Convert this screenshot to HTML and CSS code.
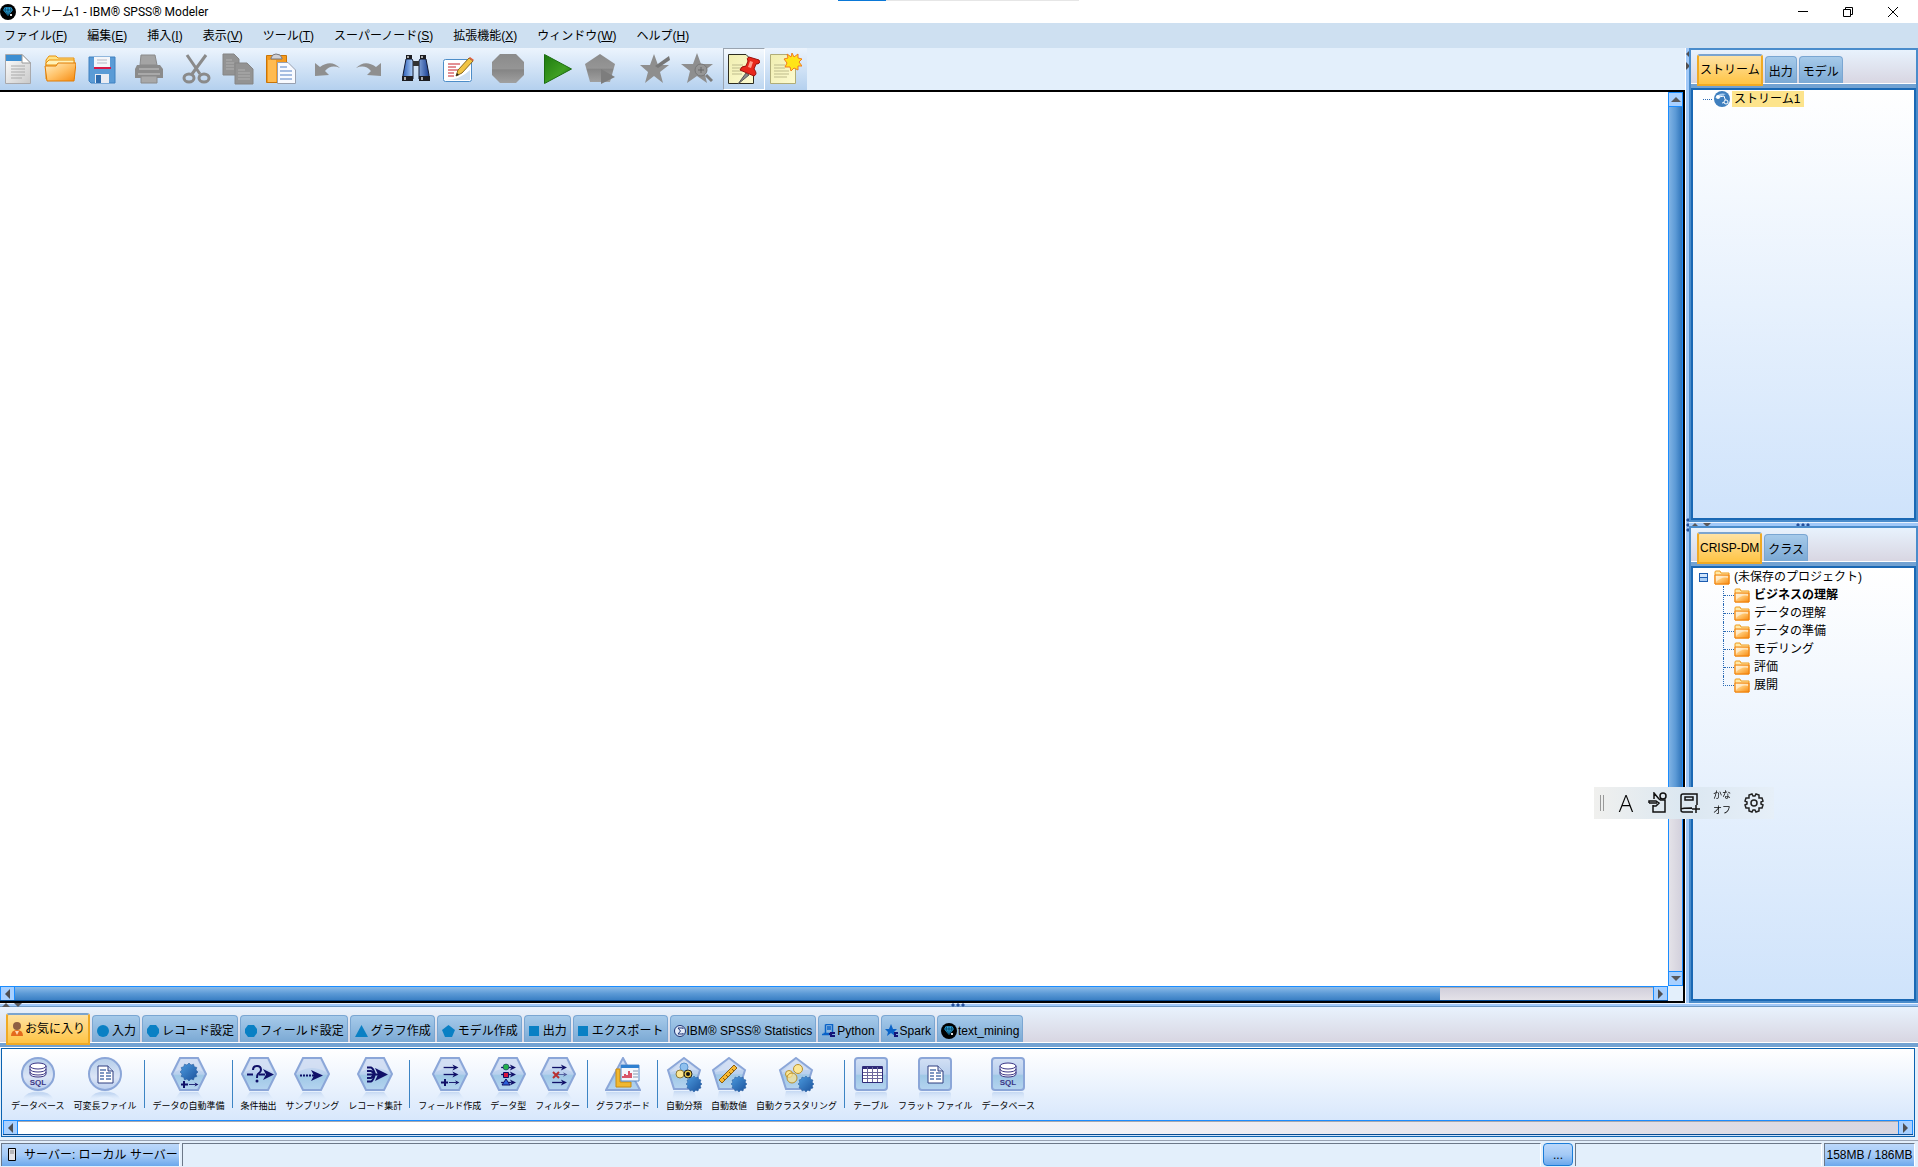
FILE: index.html
```
<!DOCTYPE html>
<html lang="ja">

<head>
    <meta charset="UTF-8">
    <meta name="viewport" content="width=device-width, initial-scale=1.0">
    <title>ストリーム1 - IBM® SPSS® Modeler</title>
    <link rel="stylesheet" href="styles.css">
</head>

<body>
    <!-- shared icons -->
    <svg class="defs" aria-hidden="true">
        <defs>
            <linearGradient id="g_node" x1="0" y1="0" x2="0" y2="1">
                <stop offset="0" stop-color="#d3e0f4" />
                <stop offset="0.5" stop-color="#b9d0ee" />
                <stop offset="0.55" stop-color="#9fc8e6" />
                <stop offset="1" stop-color="#b5d4f0" />
            </linearGradient>
            <linearGradient id="g_circle" x1="0" y1="0" x2="0" y2="1">
                <stop offset="0" stop-color="#b4cdea" />
                <stop offset="0.6" stop-color="#dbe5f6" />
                <stop offset="1" stop-color="#b9cdee" />
            </linearGradient>
            <linearGradient id="g_mirror" x1="0" y1="0" x2="0" y2="1">
                <stop offset="0" stop-color="#bcd2f0" stop-opacity="0.8" />
                <stop offset="1" stop-color="#dbe9fb" stop-opacity="0" />
            </linearGradient>
            <linearGradient id="g_gear" x1="0" y1="0" x2="1" y2="1">
                <stop offset="0" stop-color="#4d9ce0" />
                <stop offset="1" stop-color="#1a519b" />
            </linearGradient>
            <linearGradient id="g_folder" x1="0" y1="0" x2="1" y2="1">
                <stop offset="0" stop-color="#fff0c4" />
                <stop offset="0.5" stop-color="#ffc268" />
                <stop offset="1" stop-color="#f68a10" />
            </linearGradient>
            <linearGradient id="g_page" x1="0" y1="0" x2="1" y2="1">
                <stop offset="0" stop-color="#ffffff" />
                <stop offset="1" stop-color="#c9c9c9" />
            </linearGradient>
            <linearGradient id="g_note" x1="0" y1="0" x2="1" y2="1">
                <stop offset="0" stop-color="#f0eeb0" />
                <stop offset="1" stop-color="#fdfbd0" />
            </linearGradient>
            <linearGradient id="g_tube" x1="0" y1="0" x2="1" y2="0">
                <stop offset="0" stop-color="#2c5fb8" />
                <stop offset="0.4" stop-color="#b4d4fa" />
                <stop offset="1" stop-color="#1a3f92" />
            </linearGradient>
            <linearGradient id="g_play" x1="0" y1="0" x2="1" y2="1">
                <stop offset="0" stop-color="#1d7a10" />
                <stop offset="0.6" stop-color="#3f9f22" />
                <stop offset="1" stop-color="#136b0c" />
            </linearGradient>
            <linearGradient id="g_gray" x1="0" y1="0" x2="0" y2="1">
                <stop offset="0" stop-color="#8b8b8b" />
                <stop offset="0.5" stop-color="#959595" />
                <stop offset="0.55" stop-color="#858585" />
                <stop offset="1" stop-color="#a0a0a0" />
            </linearGradient>
        </defs>

        <symbol id="n_circle" viewBox="0 0 36 44">
            <path d="M5 43C9 35 27 35 31 43" fill="none" stroke="url(#g_mirror)" stroke-width="5" />
            <circle cx="18" cy="17" r="16" fill="url(#g_circle)" stroke="#8ba6d8" stroke-width="2" />
        </symbol>
        <symbol id="n_hex" viewBox="0 0 36 44">
            <path d="M9 35H27L33 43H3Z" fill="url(#g_mirror)" />
            <path d="M9 1H27L35 17L27 33H9L1 17Z" fill="url(#g_node)" stroke="#8ba6d8" stroke-width="2" />
            <path d="M10 3H26L32 15Q18 7 4 15Z" fill="#d5e0f4" opacity="0.8" />
        </symbol>
        <symbol id="n_pent" viewBox="0 0 36 44">
            <path d="M8 34H28L31 43H6Z" fill="url(#g_mirror)" />
            <path d="M18 1L34 13L28 32H8L2 13Z" fill="url(#g_node)" stroke="#8ba6d8" stroke-width="2" />
            <path d="M18 3L31 13Q18 12 4 15Z" fill="#d5e0f4" opacity="0.8" />
            <use href="#gear" x="20" y="19" width="16" height="16" />
        </symbol>
        <symbol id="n_square" viewBox="0 0 36 44">
            <rect x="2" y="35" width="32" height="9" rx="2" fill="url(#g_mirror)" />
            <rect x="2" y="1" width="32" height="32" rx="3" fill="url(#g_node)" stroke="#8ba6d8" stroke-width="2" />
        </symbol>
        <symbol id="gear" viewBox="0 0 16 16">
            <path d="M8 0L9.800 1.800L12 1L12.700 3.300L15 4L14.200 6.200L16 8L14.200 9.800L15 12L12.700 12.700L12 15L9.800 14.200L8 16L6.200 14.200L4 15L3.300 12.700L1 12L1.800 9.800L0 8L1.800 6.200L1 4L3.300 3.300L4 1L6.200 1.800Z" fill="url(#g_gear)" stroke="#2a5c9e" stroke-width="0.500" />
        </symbol>
        <symbol id="g_disks" viewBox="0 0 36 44">
            <g fill="#fff" stroke="#3a3484" stroke-width="1">
                <path d="M10 9V17C10 21 26 21 26 17V9" />
                <path d="M10 12C10 16 26 16 26 12M10 15C10 19 26 19 26 15" fill="none" />
                <ellipse cx="18" cy="9" rx="8" ry="3" />
            </g>
        </symbol>
        <symbol id="g_file" viewBox="0 0 36 44">
            <path d="M11 9H21L26 14V26H11Z" fill="#fff" stroke="#2e3f80" />
            <path d="M21 9V14H26" fill="#ccd8ee" stroke="#2e3f80" />
            <path d="M13 13H19M13 16H17M19 16H24M13 19H17M19 19H24M13 22H17M19 22H24" stroke="#5578ae" stroke-width="1.500" />
        </symbol>
        <symbol id="arrow" viewBox="0 0 18 8">
            <path d="M0 4H12" stroke="#101068" stroke-width="1.500" />
            <path d="M10 0.500L17 4L10 7.500L12 4Z" fill="#101068" />
        </symbol>
        <symbol id="folder" viewBox="0 0 16 15">
            <path d="M1 14V2Q1 1 2 1H6L7 3H15V14Z" fill="#ffe9a8" stroke="#f09a18" />
            <path d="M1 5H15V14H1Z" fill="url(#g_folder)" stroke="#f07c08" />
            <path d="M2 12Q8 6 14 8V6H2Z" fill="#fff" opacity="0.500" />
        </symbol>
        <symbol id="gem" viewBox="0 0 16 16">
            <circle cx="8" cy="8" r="8" fill="#000" />
            <path d="M5 3H11L13 6L8 12L3 6Z" fill="#2ba4dc" />
            <path d="M3 6H13M6 3L5 6L8 12L11 6L10 3M8 3V12" stroke="#05334d" stroke-width="0.700" fill="none" />
            <path d="M10 10H12V12H10Z" fill="#ddd" />
        </symbol>
        <symbol id="tri_up" viewBox="0 0 10 5"><path d="M0 5L5 0L10 5Z" fill="#59595c" /></symbol>
        <symbol id="tri_down" viewBox="0 0 10 5"><path d="M0 0H10L5 5Z" fill="#59595c" /></symbol>
        <symbol id="tri_left" viewBox="0 0 5 10"><path d="M5 0V10L0 5Z" fill="#4f4f52" /></symbol>
        <symbol id="tri_right" viewBox="0 0 5 10"><path d="M0 0V10L5 5Z" fill="#4f4f52" /></symbol>
        <symbol id="dots_h" viewBox="0 0 14 4">
            <path d="M2 0L4 2L2 4L0 2ZM7 0L9 2L7 4L5 2ZM12 0L14 2L12 4L10 2Z" fill="#24509c" />
        </symbol>
        <symbol id="dots_v" viewBox="0 0 4 14">
            <path d="M2 0L4 2L2 4L0 2ZM2 5L4 7L2 9L0 7ZM2 10L4 12L2 14L0 12Z" fill="#24509c" />
        </symbol>
    </svg>

    <header class="titlebar">
        <svg class="app_icon" width="16" height="16"><use href="#gem" /></svg>
        <h1>ストリーム1 - IBM® SPSS® Modeler</h1>
        <div class="win_buttons">
            <button aria-label="最小化"><svg width="10" height="10"><path d="M0 4.500H10" stroke="#000" /></svg></button>
            <button aria-label="元に戻す"><svg width="10" height="10" fill="none" stroke="#000"><path d="M0.500 2.500H7.500V9.500H0.500ZM2.500 2V0.500H9.500V7.500H8" /></svg></button>
            <button aria-label="閉じる"><svg width="10" height="10"><path d="M0 0L10 10M10 0L0 10" stroke="#000" /></svg></button>
        </div>
        <div class="top_progress"><span></span></div>
    </header>

    <nav class="menubar">
        <button>ファイル(<u>F</u>)</button>
        <button>編集(<u>E</u>)</button>
        <button>挿入(<u>I</u>)</button>
        <button>表示(<u>V</u>)</button>
        <button>ツール(<u>T</u>)</button>
        <button>スーパーノード(<u>S</u>)</button>
        <button>拡張機能(<u>X</u>)</button>
        <button>ウィンドウ(<u>W</u>)</button>
        <button>ヘルプ(<u>H</u>)</button>
    </nav>

    <main>
        <section class="workspace">
            <div class="toolbar_row">
                <div class="toolbar">
                    <div class="tools">
                        <button aria-label="新規">
                            <svg width="32" height="32">
                                <path d="M3.500 1.500H20L28.500 10V30.500H3.500Z" fill="url(#g_page)" stroke="#a9a9ac" />
                                <path d="M4 2H20V8H4Z" fill="#3c8ed2" />
                                <path d="M20 1.500V10H28.500Z" fill="#fff" stroke="#999" />
                                <path d="M9 13H23M9 16H23M9 19H23M9 22H23M9 25H20" stroke="#aaa" />
                            </svg>
                        </button>
                        <button aria-label="開く">
                            <svg width="32" height="32">
                                <path d="M2 26V7L5 3H12L14 5H30V26Z" fill="#ffe183" stroke="#e8900c" />
                                <path d="M2 10L5 7H30V12H2Z" fill="#fff2b8" stroke="#e8900c" />
                                <path d="M1 13H12L14 10H32L30 28H3Z" fill="url(#g_folder)" stroke="#e07c06" />
                            </svg>
                        </button>
                        <button aria-label="保存">
                            <svg width="32" height="32">
                                <path d="M3 4H29V30H5L3 28Z" fill="#5a9bd6" stroke="#3f80c0" />
                                <path d="M8 4H24V16H8Z" fill="#f4f6fa" />
                                <path d="M8 14H25V16H8Z" fill="#d81848" />
                                <path d="M11 7H21M11 10H21" stroke="#b5b8c4" />
                                <path d="M9 21H23V30H9Z" fill="#e9ecf3" />
                                <path d="M10 22H15V30H10Z" fill="#2f6cae" />
                            </svg>
                        </button>
                    </div>
                    <div class="tools">
                        <button disabled aria-label="印刷">
                            <svg width="32" height="32">
                                <path d="M8 2H22L24 12H7Z" fill="#a4a4a4" stroke="#8a8a8a" />
                                <path d="M4 12H27L30 16V25H2V16Z" fill="#8b8b8b" />
                                <path d="M6 16H26M5 21H27" stroke="#a9a9a9" stroke-width="2" />
                                <path d="M8 23H24V30H8Z" fill="#a8a8a8" stroke="#8a8a8a" />
                            </svg>
                        </button>
                    </div>
                    <div class="tools">
                        <button disabled aria-label="切り取り">
                            <svg width="32" height="32" fill="none" stroke="#8a8a8a">
                                <path d="M7 2L20 21M26 2L12 21" stroke-width="3" />
                                <ellipse cx="9" cy="25" rx="5" ry="4" stroke-width="3" />
                                <ellipse cx="24" cy="25" rx="5" ry="4" stroke-width="3" />
                            </svg>
                        </button>
                        <button disabled aria-label="コピー">
                            <svg width="32" height="32" fill="#939393" stroke="#858585">
                                <path d="M1 1H12L17 6V22H1Z" />
                                <path d="M4 7H10M4 10H12M4 13H12M4 16H12" stroke="#b0b0b0" />
                                <path d="M13 10H25L31 16V31H13Z" />
                                <path d="M16 17H23M16 20H28M16 23H28M16 26H28" stroke="#b0b0b0" />
                            </svg>
                        </button>
                        <button aria-label="貼り付け">
                            <svg width="32" height="32">
                                <path d="M2.500 2.500H22.500V29.500H2.500Z" fill="#f49a1e" stroke="#c87408" />
                                <path d="M4 7H12V29H4Z" fill="#ffbb50" />
                                <path d="M7 5Q8 1 12 1Q17 1 18 5V6H7Z" fill="#d0d0d4" stroke="#77777c" />
                                <path d="M13.500 9.500H24L31.500 17V30.500H13.500Z" fill="#f8faff" stroke="#98a0b0" />
                                <path d="M16 14H23M16 18H28M16 22H28M16 26H28" stroke="#5480c4" />
                            </svg>
                        </button>
                    </div>
                    <div class="tools">
                        <button disabled aria-label="元に戻す">
                            <svg width="32" height="32"><path d="M4 10L9 14Q20 6 29 15Q20 11 14 18L18 22L4 23Z" fill="#8f8f8f" /></svg>
                        </button>
                        <button disabled aria-label="やり直し">
                            <svg width="32" height="32"><path d="M28 10L23 14Q12 6 3 15Q12 11 18 18L14 22L28 23Z" fill="#8f8f8f" /></svg>
                        </button>
                    </div>
                    <div class="tools">
                        <button aria-label="検索">
                            <svg width="32" height="32">
                                <path d="M6 6L3 22V26H13V8L12 6ZM26 6L29 22V26H19V8L20 6Z" fill="url(#g_tube)" stroke="#111a33" />
                                <path d="M13 8H19V13H13Z" fill="#333" />
                                <path d="M6 2H12V6H6ZM20 2H26V6H20ZM2 23H13V28H2ZM19 23H30V28H19Z" fill="#1c1c20" />
                                <path d="M5 24V27M22 24V27M8 3V5M22 3V5" stroke="#aaa" stroke-width="2" />
                            </svg>
                        </button>
                        <button aria-label="ストリームのプロパティ">
                            <svg width="32" height="32">
                                <rect x="1.500" y="6.500" width="28" height="22" rx="2" fill="#fff" stroke="#4d8dc8" />
                                <path d="M3 27Q18 27 28 17V27Z" fill="#cfe0f2" />
                                <path d="M6 11H18M6 14H14M6 17H16M6 20H12M6 23H12" stroke="#c82028" />
                                <path d="M14 23L16 17L27 5L31 8L20 20Z" fill="#f2c444" stroke="#8a6a20" />
                                <path d="M27 5L28 4L32 7L31 8Z" fill="#e05a38" />
                                <path d="M14 23L15 20L17 22Z" fill="#222" />
                            </svg>
                        </button>
                    </div>
                    <div class="tools wide">
                        <button disabled aria-label="停止">
                            <svg width="32" height="32"><path d="M8 1H24L32 9V22L24 30H8L0 22V9Z" fill="url(#g_gray)" /></svg>
                        </button>
                    </div>
                    <div class="tools wide">
                        <button aria-label="実行">
                            <svg width="32" height="32"><path d="M2.500 1.500L29.500 16L2.500 30.500Z" fill="url(#g_play)" stroke="#1b6d10" /></svg>
                        </button>
                        <button disabled aria-label="選択を実行">
                            <svg width="32" height="32">
                                <path d="M16 1L31 11L26 29H6L1 11Z" fill="url(#g_gray)" />
                                <path d="M17 16L31 24L17 31Z" fill="#7d7d7d" />
                            </svg>
                        </button>
                    </div>
                    <div class="tools wider">
                        <button disabled aria-label="お気に入りに追加">
                            <svg width="32" height="32">
                                <path d="M15 1L19 12H30L21 19L24 30L15 23L6 30L9 19L1 12H11Z" fill="#8e8e8e" />
                                <path d="M16 13L30 3L31 7L19 15Z" fill="#777" />
                            </svg>
                        </button>
                        <button disabled aria-label="お気に入りを検索">
                            <svg width="32" height="32">
                                <path d="M16 0L20 11H32L23 18L26 30L16 23L6 30L9 18L0 11H12Z" fill="#8e8e8e" />
                                <circle cx="20" cy="17" r="6" fill="#959595" stroke="#777" />
                                <path d="M17 17H23M20 14V20" stroke="#666" />
                                <path d="M25 22L31 28" stroke="#7c7c7c" stroke-width="3" />
                            </svg>
                        </button>
                    </div>
                    <button class="toggle pressed" aria-label="コメントを表示">
                        <svg width="32" height="32">
                            <path d="M0.500 1.500H18L25.500 9V30.500H0.500Z" fill="url(#g_note)" stroke="#2c2c20" />
                            <path d="M4 12H15M4 15H15M4 18H14M4 21H14" stroke="#bdbb8c" />
                            <path d="M18 20L10 31L21 22Z" fill="#888" stroke="#555" />
                            <path d="M12 17Q13 13 18 13L20 8Q18 5 21 4L31 7Q33 11 28 11L26 16Q30 21 26 23Z" fill="#e8281c" stroke="#9c100c" />
                            <path d="M20 14L22 8L25 9L23 15Z" fill="#ff9a8a" />
                        </svg>
                    </button>
                    <button class="toggle" aria-label="新しいコメント">
                        <svg width="32" height="32">
                            <path d="M0.500 1.500H18L25.500 9V30.500H0.500Z" fill="url(#g_note)" stroke="#b0ad78" />
                            <path d="M4 12H15M4 15H15M4 18H19M4 21H19M4 24H17" stroke="#bdbb8c" />
                            <path d="M22 0L24 4L28 1L28 5L32 6L29 9L32 13L28 13L28 17L24 15L21 18L20 14L15 14L17 10L14 6L18 5L17 1L21 4Z" fill="#ffe418" stroke="#f07c20" />
                        </svg>
                    </button>
                </div>
            </div>
            <div class="canvas_frame">
                <div class="canvas"></div>
                <div class="scroll vertical">
                    <button aria-label="上へ"><svg width="10" height="5"><use href="#tri_up" /></svg></button>
                    <span class="thumb"></span>
                    <span class="track"></span>
                    <button aria-label="下へ"><svg width="10" height="5"><use href="#tri_down" /></svg></button>
                </div>
                <div class="scroll horizontal">
                    <button aria-label="左へ"><svg width="5" height="10"><use href="#tri_left" /></svg></button>
                    <span class="thumb"></span>
                    <span class="track"></span>
                    <button aria-label="右へ"><svg width="5" height="10"><use href="#tri_right" /></svg></button>
                </div>
            </div>
        </section>

        <div class="split_v">
            <svg width="4" height="8"><use href="#tri_left" /></svg>
            <svg width="4" height="8"><use href="#tri_right" /></svg>
            <svg class="grip" width="4" height="14"><use href="#dots_v" /></svg>
        </div>

        <aside>
            <section class="panel managers">
                <div class="tabs">
                    <button class="tab selected">ストリーム</button>
                    <button class="tab">出力</button>
                    <button class="tab">モデル</button>
                </div>
                <div class="tab_line"></div>
                <div class="panel_body">
                    <div class="tree_row stream_row">
                        <span class="branch_h"></span>
                        <svg width="16" height="16">
                            <circle cx="8" cy="8" r="8" fill="#3f7fbe" />
                            <path d="M1 7Q5 1 12 3Q8 5 1 7Z" fill="#a8cdf0" />
                            <path d="M5 6L10 5L12 11L8 12" fill="none" stroke="#fff" />
                            <circle cx="4" cy="6" r="2" fill="#fff" />
                            <circle cx="12" cy="11" r="2" fill="#3f7fbe" stroke="#fff" />
                        </svg>
                        <span class="stream_name">ストリーム1</span>
                    </div>
                </div>
            </section>

            <div class="split_h">
                <svg width="8" height="4"><use href="#tri_up" /></svg>
                <svg width="8" height="4"><use href="#tri_down" /></svg>
                <svg class="grip" width="14" height="4"><use href="#dots_h" /></svg>
            </div>

            <section class="panel project">
                <div class="tabs">
                    <button class="tab selected">CRISP-DM</button>
                    <button class="tab">クラス</button>
                </div>
                <div class="tab_line"></div>
                <div class="panel_body">
                    <div class="tree_row root_row">
                        <button class="expander" aria-label="折りたたむ"></button>
                        <svg width="16" height="15"><use href="#folder" /></svg>
                        <span>(未保存のプロジェクト)</span>
                    </div>
                    <ul class="tree">
                        <li class="tree_row current"><span class="branch"></span><svg width="16" height="15"><use href="#folder" /></svg><span>ビジネスの理解</span></li>
                        <li class="tree_row"><span class="branch"></span><svg width="16" height="15"><use href="#folder" /></svg><span>データの理解</span></li>
                        <li class="tree_row"><span class="branch"></span><svg width="16" height="15"><use href="#folder" /></svg><span>データの準備</span></li>
                        <li class="tree_row"><span class="branch"></span><svg width="16" height="15"><use href="#folder" /></svg><span>モデリング</span></li>
                        <li class="tree_row"><span class="branch"></span><svg width="16" height="15"><use href="#folder" /></svg><span>評価</span></li>
                        <li class="tree_row"><span class="branch"></span><svg width="16" height="15"><use href="#folder" /></svg><span>展開</span></li>
                    </ul>
                </div>
            </section>
        </aside>
    </main>

    <div class="split_h bottom_split">
        <svg width="8" height="4"><use href="#tri_up" /></svg>
        <svg width="8" height="4"><use href="#tri_down" /></svg>
        <svg class="grip" width="14" height="4"><use href="#dots_h" /></svg>
    </div>

    <section class="palette">
        <div class="tabs">
            <button class="tab selected">
                <svg width="12" height="15">
                    <path d="M0 14Q0 8 6 8Q12 8 12 14Z" fill="#e46a1c" />
                    <circle cx="6" cy="4" r="4" fill="#8e5f42" />
                    <path d="M4 9L6 13L8 9Z" fill="#ffd9b0" />
                </svg>お気に入り</button>
            <button class="tab"><svg width="12" height="12"><circle cx="6" cy="6" r="6" fill="#0a80c4" /></svg>入力</button>
            <button class="tab"><svg width="12" height="12"><path d="M3 0H9L12 4V8L9 12H3L0 8V4Z" fill="#0a80c4" /></svg>レコード設定</button>
            <button class="tab"><svg width="12" height="12"><path d="M3 0H9L12 4V8L9 12H3L0 8V4Z" fill="#0a80c4" /></svg>フィールド設定</button>
            <button class="tab"><svg width="13" height="12"><path d="M6.500 0L13 12H0Z" fill="#0a80c4" /></svg>グラフ作成</button>
            <button class="tab"><svg width="13" height="12"><path d="M6.500 0L13 5L10 12H3L0 5Z" fill="#0a80c4" /></svg>モデル作成</button>
            <button class="tab"><svg width="11" height="10"><path d="M0 0H10V10H0Z" fill="#0a80c4" /></svg>出力</button>
            <button class="tab"><svg width="11" height="10"><path d="M0 0H10V10H0Z" fill="#0a80c4" /></svg>エクスポート</button>
            <button class="tab latin">
                <svg width="12" height="12">
                    <circle cx="6" cy="6" r="5.500" fill="#e4ecfa" stroke="#1c3274" />
                    <path d="M9 4V3H4L6.500 6L4 9H9V8" fill="none" stroke="#1c3274" />
                </svg>IBM® SPSS® Statistics</button>
            <button class="tab latin">
                <svg width="14" height="14">
                    <path d="M3.500 0.500H10.500V9.500H1.500M3.500 0.500V9M5 3H9M5 5H9M0 10.500H8" fill="none" stroke="#0a63c8" stroke-width="1.500" />
                    <path d="M9 8V13M9 9H13M9 12H13M7 10H10" stroke="#141478" stroke-width="2" />
                </svg>Python</button>
            <button class="tab latin">
                <svg width="14" height="14">
                    <path d="M6 0L8 5H12L9 8L10 12L6 9L2 12L3 8L0 5H4Z" fill="#0a63c8" />
                    <path d="M10 8V13M10 9H13M10 12H13" stroke="#141478" stroke-width="2" />
                </svg>Spark</button>
            <button class="tab latin"><svg width="16" height="16"><use href="#gem" /></svg>text_mining</button>
        </div>
        <div class="tab_line"></div>
        <div class="palette_body">
            <div class="nodes">
                <div class="node_group">
                    <button class="node">
                        <svg width="36" height="44">
                            <use href="#n_circle" />
                            <use href="#g_disks" />
                            <text x="18" y="28" text-anchor="middle" class="sql">SQL</text>
                        </svg>データベース</button>
                    <button class="node"><svg width="36" height="44"><use href="#n_circle" /><use href="#g_file" /></svg>可変長ファイル</button>
                </div>
                <div class="node_group">
                    <button class="node">
                        <svg width="36" height="44">
                            <use href="#n_hex" />
                            <use href="#gear" x="9" y="6" width="18" height="18" />
                            <path d="M13 24V31M10 27.500H17" stroke="#101068" stroke-width="2" />
                            <use href="#arrow" x="18" y="24" width="10" height="7" />
                        </svg>データの自動準備</button>
                </div>
                <div class="node_group">
                    <button class="node">
                        <svg width="36" height="44">
                            <use href="#n_hex" />
                            <path d="M6 17.500H12M18 17.500H24" stroke="#101068" stroke-width="2" />
                            <path d="M22 12L33 17.500L22 23L25 17.500Z" fill="#101068" />
                            <path d="M12 13Q12 9 16 9Q20 9 20 13Q20 15 17 17Q16 18 16 21" fill="none" stroke="#101068" stroke-width="2" />
                            <circle cx="16" cy="24" r="1.500" fill="#101068" />
                        </svg>条件抽出</button>
                    <button class="node">
                        <svg width="36" height="44">
                            <use href="#n_hex" />
                            <path d="M6 18.500H20" stroke="#101068" stroke-width="2" stroke-dasharray="2 1" />
                            <path d="M17 13L29 18.500L17 24L20 18.500Z" fill="#101068" />
                        </svg>サンプリング</button>
                    <button class="node">
                        <svg width="36" height="44">
                            <use href="#n_hex" />
                            <path d="M10 10.500H14Q16 11 18 17M10 17.500H22M10 24.500H14Q16 24 18 17M10 14H14L18 17M10 21H14L18 17" fill="none" stroke="#101068" stroke-width="2" />
                            <path d="M18 11L31 17.500L18 24L21 17.500Z" fill="#101068" />
                        </svg>レコード集計</button>
                </div>
                <div class="node_group">
                    <button class="node">
                        <svg width="36" height="44">
                            <use href="#n_hex" />
                            <use href="#arrow" x="11" y="7" width="17" height="7" />
                            <use href="#arrow" x="11" y="14" width="17" height="7" />
                            <use href="#arrow" x="17" y="22" width="11" height="7" />
                            <path d="M13 22V29M9 25.500H16" stroke="#101068" stroke-width="2" />
                        </svg>フィールド作成</button>
                    <button class="node">
                        <svg width="36" height="44">
                            <use href="#n_hex" />
                            <use href="#arrow" x="10" y="7" width="18" height="7" />
                            <use href="#arrow" x="10" y="14" width="18" height="7" />
                            <use href="#arrow" x="10" y="22" width="18" height="7" />
                            <circle cx="16" cy="10" r="3" fill="#22b04c" stroke="#101068" stroke-width="0.500" />
                            <path d="M13.500 15.500H18.500V20.500H13.500Z" fill="#d8143c" stroke="#101068" />
                            <path d="M16 22L20 28H12Z" fill="#2c60d8" stroke="#101068" />
                        </svg>データ型</button>
                    <button class="node">
                        <svg width="36" height="44">
                            <use href="#n_hex" />
                            <use href="#arrow" x="12" y="7" width="16" height="7" />
                            <use href="#arrow" x="17" y="14" width="11" height="7" opacity="0.600" />
                            <use href="#arrow" x="12" y="22" width="16" height="7" />
                            <path d="M13 15L19 21M19 15L13 21" stroke="#b83030" stroke-width="2" />
                        </svg>フィルター</button>
                </div>
                <div class="node_group">
                    <button class="node">
                        <svg width="36" height="44">
                            <path d="M1 35H35L34 44H2Z" fill="url(#g_mirror)" />
                            <path d="M18 1L35 33H1Z" fill="url(#g_node)" stroke="#8ba6d8" stroke-width="2" />
                            <path d="M11 12H15V25H26V30H11Z" fill="#f0b830" stroke="#c88a10" />
                            <path d="M16 8H34V24H16Z" fill="#f4f7fc" stroke="#5a8cc8" />
                            <path d="M16 8H34V11H16Z" fill="#2f80d0" />
                            <path d="M18 21V19M20 21V17M22 21V18M24 21V14M26 21V16" stroke="#d02038" stroke-width="1.500" />
                            <path d="M28 14H33M28 17H33M28 20H33" stroke="#8898b0" />
                        </svg>グラフボード</button>
                </div>
                <div class="node_group">
                    <button class="node">
                        <svg width="36" height="44">
                            <use href="#n_pent" />
                            <circle cx="18" cy="10" r="4" fill="#8fc0ee" stroke="#5a94d0" />
                            <circle cx="14" cy="17" r="4" fill="#fce694" stroke="#8a7a3c" />
                            <circle cx="22" cy="17" r="4" fill="#e8c84c" stroke="#222" />
                            <circle cx="22" cy="17" r="2" fill="#111" />
                        </svg>自動分類</button>
                    <button class="node">
                        <svg width="36" height="44">
                            <use href="#n_pent" />
                            <path d="M8 23L23 8L26 11L11 26Z" fill="#f8b830" stroke="#8a6014" />
                            <path d="M12 21L14 23M15 18L17 20M18 15L20 17M21 12L23 14" stroke="#8a6014" />
                        </svg>自動数値</button>
                    <button class="node">
                        <svg width="36" height="44">
                            <use href="#n_pent" />
                            <circle cx="20" cy="12" r="4.500" fill="#fce694" stroke="#b8902c" />
                            <circle cx="11" cy="17" r="3.500" fill="#fce694" stroke="#b8902c" />
                            <circle cx="14" cy="21" r="5" fill="#fce694" fill-opacity="0.700" stroke="#b8902c" />
                        </svg>自動クラスタリング</button>
                </div>
                <div class="node_group">
                    <button class="node">
                        <svg width="36" height="44">
                            <use href="#n_square" />
                            <path d="M9.500 9.500H29.500V25.500H9.500Z" fill="#fff" stroke="#2e2a78" />
                            <path d="M10 10H29V12H10Z" fill="#2e2a78" />
                            <path d="M10 15.500H29M10 18.500H29M10 21.500H29M14.500 10V25M19.500 10V25M24.500 10V25" stroke="#6b679c" />
                        </svg>テーブル</button>
                    <button class="node"><svg width="36" height="44"><use href="#n_square" /><use href="#g_file" /></svg>フラット ファイル</button>
                    <button class="node">
                        <svg width="36" height="44">
                            <use href="#n_square" />
                            <use href="#g_disks" />
                            <text x="18" y="28" text-anchor="middle" class="sql">SQL</text>
                        </svg>データベース</button>
                </div>
            </div>
            <div class="scroll horizontal plain">
                <button aria-label="左へ"><svg width="5" height="10"><use href="#tri_left" /></svg></button>
                <span class="track"></span>
                <button aria-label="右へ"><svg width="5" height="10"><use href="#tri_right" /></svg></button>
            </div>
        </div>
    </section>

    <footer class="statusbar">
        <button class="status server">
            <svg width="9" height="14">
                <path d="M0.500 0.500H7.500V12.500H0.500Z" fill="#e4e4e8" stroke="#000" />
                <path d="M2 3H6M2 5H6" stroke="#888" />
            </svg>サーバー: ローカル サーバー</button>
        <div class="status message"></div>
        <button class="more">...</button>
        <div class="status progress"></div>
        <button class="status memory">158MB / 186MB</button>
    </footer>

    <!-- floating IME bar -->
    <div class="ime">
        <span class="ime_grip"></span>
        <button class="ime_mode">A</button>
        <button aria-label="ツール">
            <svg width="20" height="22" fill="none" stroke="#111" stroke-width="1.500">
                <path d="M5 13V20H17V8H12M6 7V1L11 7M1 11H9M1 11V9H8L11 11L8 14H5" />
                <circle cx="15" cy="4" r="3" />
                <path d="M13 6L11 8" />
            </svg>
        </button>
        <button aria-label="辞書">
            <svg width="20" height="22" fill="none" stroke="#111" stroke-width="1.500">
                <path d="M17 13V2H3Q1 2 1 4V18Q1 20 3 20H13M1 17Q2 16 12 16M5 5H13V8H5ZM16 13V21M12 17H20" />
            </svg>
        </button>
        <button class="ime_kana">かな<br>オフ</button>
        <button aria-label="設定">
            <svg width="20" height="20" fill="none" stroke="#222" stroke-width="1.500">
                <path d="M8 1L9 3H11L12 1L15 2L15 5L18 5L19 8L17 9V11L19 12L18 15L15 15L15 18L12 19L11 17H9L8 19L5 18L5 15L2 15L1 12L3 11V9L1 8L2 5L5 5L5 2Z" />
                <circle cx="10" cy="10" r="3" />
            </svg>
        </button>
    </div>
</body>

</html>
```
FILE: styles.css
```
* {
    margin: 0;
    padding: 0;
    box-sizing: border-box;
}

body {
    display: flex;
    flex-direction: column;
    height: 100vh;
    overflow: hidden;
    background: #e3effb;
    color: #000;
    font-family: "Liberation Sans", "Noto Sans CJK JP", sans-serif;
    font-size: 12px;
    line-height: 16px;
}

button {
    border: none;
    background: none;
    color: inherit;
    font: inherit;
    white-space: nowrap;
}

svg {
    display: block;
    flex-shrink: 0;
}

.defs {
    position: absolute;
    width: 0;
    height: 0;
}

/* title */

.titlebar {
    position: relative;
    display: flex;
    align-items: center;
    height: 23px;
    background: #fff;
}

.titlebar h1 {
    flex: 1;
    margin-left: 5px;
    font-family: Roboto, "Noto Sans CJK JP", sans-serif;
    font-size: 12px;
    font-weight: normal;
    font-feature-settings: "palt";
}

.win_buttons {
    display: flex;
    margin-right: 3px;
}

.win_buttons button {
    display: flex;
    align-items: center;
    justify-content: center;
    width: 45px;
    height: 20px;
}

.top_progress {
    position: absolute;
    top: 0;
    left: 50%;
    width: 241px;
    height: 1px;
    margin-left: -121px;
    background: #e6e6e6;
}

.top_progress span {
    display: block;
    width: 20%;
    height: 1px;
    background: #0a78d7;
}

/* menu */

.menubar {
    display: flex;
    align-items: center;
    gap: 20px;
    height: 25px;
    padding-left: 4px;
    background: #cee0f1;
}

main {
    display: flex;
    flex: 1;
    min-height: 0;
}

.workspace {
    display: flex;
    flex: 1;
    flex-direction: column;
    min-width: 0;
}

/* toolbar */

.toolbar_row {
    display: flex;
    height: 42px;
}

.toolbar {
    display: flex;
    align-items: center;
    background: linear-gradient(#ecf4fd, #b4d0ee);
}

.tools {
    display: flex;
    gap: 6px;
    margin-right: 11px;
}

.tools:has(+ .wide) {
    margin-right: 14px;
}

.tools:has(+ .wider) {
    margin-right: 19px;
}

.tools.wider {
    margin-right: 8px;
}

.tools button {
    display: flex;
    justify-content: center;
    width: 36px;
}

.toggle {
    display: flex;
    align-items: center;
    width: 42px;
    height: 42px;
    padding-left: 5px;
}

.toggle.pressed {
    padding-left: 4px;
    border: 1px solid #fff;
    border-top-color: #9aa4b0;
    border-left-color: #9aa4b0;
    background: linear-gradient(#f4f9fe, #bdd6f0);
}

/* canvas */

.canvas_frame {
    display: grid;
    flex: 1;
    grid-template: 1fr 15px / 1fr 15px;
    min-height: 0;
    border: solid #000;
    border-width: 2px 2px 2px 0;
}

.canvas {
    background: #fff;
}

.scroll {
    display: flex;
    border: 1px solid #1a8cff;
}

.scroll.vertical {
    flex-direction: column;
    border-width: 0 1px;
}

.scroll.horizontal {
    height: 15px;
    border-width: 1px 0;
    border-bottom-color: #0a4c90;
}

.scroll button {
    display: flex;
    flex: none;
    align-items: center;
    justify-content: center;
    width: 15px;
    height: 13px;
    border-right: 1px solid #1a8cff;
    border-left: 1px solid #1a8cff;
    background: #a8d0ff;
}

.vertical button {
    width: 13px;
    height: 15px;
    border: solid #1a8cff;
    border-width: 1px 0;
}

.scroll .track {
    flex: 13;
    border-top: 1px solid #a8a8b0;
    background: linear-gradient(#d2d0dc, #e4e2e8);
}

.scroll .thumb {
    flex: 87;
}

.horizontal .thumb {
    background: linear-gradient(#8cbbe8, #5c9ad6 50%, #3a7fc4);
}

.vertical .thumb {
    background: linear-gradient(90deg, #7fb2e4, #5c9ad6 50%, #2f74ba);
}

.vertical .track {
    background: linear-gradient(90deg, #e4e2e8, #d2d0dc);
}

.scroll.vertical .thumb {
    flex: 82;
}

.scroll.vertical .track {
    flex: 18;
}

.plain .track {
    background: linear-gradient(90deg, #fff, #fdfdfe 40%, #d8d6e0);
}

/* splitters */

.split_v {
    display: flex;
    flex-direction: column;
    align-items: center;
    gap: 4px;
    width: 4px;
    padding: 2px 0 28px;
    border-left: 1px solid #fff;
    background: #a0c8f8;
}

.split_v .grip {
    margin: auto 0;
}

.split_h {
    display: flex;
    align-items: center;
    gap: 4px;
    height: 4px;
    padding: 0 28px 0 2px;
    border-top: 1px solid #e8f2fe;
    background: #a0c8f8;
}

.split_h .grip {
    margin: 0 auto;
}

.bottom_split {
    border-bottom: 1px solid #6c98c4;
}

/* tabs */

.tabs {
    display: flex;
    align-items: flex-end;
    gap: 2px;
    height: 33px;
    padding-left: 6px;
    background: linear-gradient(#e8f2fd, #d8d6e2);
}

.tab {
    display: flex;
    align-items: center;
    gap: 3px;
    height: 27px;
    padding: 4px 3px 0;
    border: 1px solid #7aa6d2;
    border-bottom: none;
    border-radius: 4px 4px 0 0;
    background: linear-gradient(#a6caea, #7ba9d4);
}

.tab.selected {
    z-index: 1;
    height: 32px;
    margin-bottom: -3px;
    padding-top: 0;
    border: 2px solid #f0aa24;
    border-top-color: #7ba4cf;
    border-radius: 3px 3px 0 0;
    background: linear-gradient(#fee2a4, #ffc444);
}

.tab_line {
    height: 6px;
    border: solid #fff;
    border-width: 1px 0;
    background: #72a2d2;
}

/* right side */

aside {
    display: flex;
    flex-direction: column;
    width: 229px;
}

.panel {
    display: flex;
    flex-direction: column;
    min-height: 0;
    border: 2px solid #4a8ccb;
}

.managers {
    flex: 474;
}

.project {
    flex: 477;
}

.panel .tab.selected {
    padding: 0 1px;
}

.panel .tab_line {
    height: 5px;
    border-bottom: none;
}

.panel_body {
    flex: 1;
    padding: 0 3px;
    border: 2px solid #1a68b4;
    background: linear-gradient(#fff, #cfe3fb);
}

.tree_row {
    display: flex;
    align-items: center;
    gap: 4px;
    height: 18px;
}

.stream_row {
    gap: 2px;
    padding-left: 7px;
}

.branch_h {
    width: 9px;
    border-top: 1px dotted #2a6ab4;
}

.stream_name {
    padding: 0 4px 0 2px;
    background: #fde48c;
}

.root_row {
    padding-left: 3px;
}

.expander {
    width: 9px;
    height: 9px;
    margin-right: 2px;
    border: 1px solid #1c5cb0;
    background: linear-gradient(#cfe4fb 3px, #1c5cb0 3px, #1c5cb0 4px, #a8cdf6 4px);
}

.tree {
    margin-left: 27px;
    list-style: none;
}

.tree .tree_row {
    border-left: 1px dotted #2a6ab4;
}

.tree .tree_row:last-child {
    border-left-color: transparent;
}

.branch {
    align-self: flex-start;
    width: 10px;
    height: 10px;
    margin-right: -4px;
    border-bottom: 1px dotted #2a6ab4;
}

.tree_row:last-child .branch {
    margin-left: -1px;
    width: 11px;
    border-left: 1px dotted #2a6ab4;
}

.current {
    font-weight: bold;
}

/* node palette */

.palette .tabs {
    height: 35px;
}

.palette .tab {
    padding-right: 3px;
    padding-left: 4px;
}

.palette .tab.selected {
    gap: 2px;
    padding: 0 3px;
}

.palette .tab.latin {
    gap: 1px;
    padding-left: 3px;
}

.palette_body {
    padding: 0 1px 1px;
    margin-right: 3px;
    margin-left: 1px;
    border: 1px solid #0a62b0;
    background: linear-gradient(#fff, #cfe2fb);
}

.nodes {
    display: flex;
    height: 71px;
    padding-left: 8px;
}

.node_group {
    display: flex;
    gap: 9px;
    padding-top: 8px;
}

.node_group + .node_group::before {
    content: "";
    width: 1px;
    height: 48px;
    margin: 3px -1px 0 7px;
    background: #3c84c4;
}

.node {
    display: flex;
    flex-direction: column;
    align-items: center;
    font-size: 9px;
    line-height: 11px;
}

.sql {
    font-family: "Liberation Sans", sans-serif;
    font-size: 8px;
    font-weight: bold;
    fill: #3a3484;
}

/* status */

.statusbar {
    display: flex;
    gap: 2px;
    height: 27px;
    margin-top: 3px;
    padding: 2px 3px 1px 1px;
    border-top: 1px solid #9aa4b4;
}

.status {
    border: solid #6c7888;
    border-width: 1px 0 0 1px;
    border-right: 1px solid #fff;
}

.server {
    display: flex;
    align-items: center;
    gap: 7px;
    width: 179px;
    padding-left: 6px;
}

.server,
.memory {
    background: linear-gradient(#bcd8fa, #a4caf6 50%, #6ca8ec);
}

.message {
    flex: 1;
}

.more {
    width: 30px;
    border: 1px solid #1a7cd8;
    border-radius: 4px;
    background: linear-gradient(#bcd8fa, #a4caf6 50%, #6ca8ec);
}

.progress {
    width: 247px;
}

.memory {
    width: 91px;
}

/* ime */

.ime {
    position: fixed;
    right: 144px;
    bottom: 348px;
    z-index: 2;
    display: flex;
    align-items: center;
    width: 180px;
    height: 32px;
    padding: 0 4px 0 6px;
    background: linear-gradient(90deg, #f0f0ee, #dbe7f1 50%, #e6eff8);
}

.ime button {
    display: flex;
    flex: 1;
    align-items: center;
    justify-content: center;
}

.ime_grip {
    width: 4px;
    height: 16px;
    margin-right: 6px;
    border: solid #999;
    border-width: 0 1px;
}

.ime .ime_mode {
    font-family: "Open Sans", sans-serif;
    font-size: 24px;
    font-weight: 300;
}

.ime .ime_kana {
    font-size: 9px;
    line-height: 15px;
}
```
